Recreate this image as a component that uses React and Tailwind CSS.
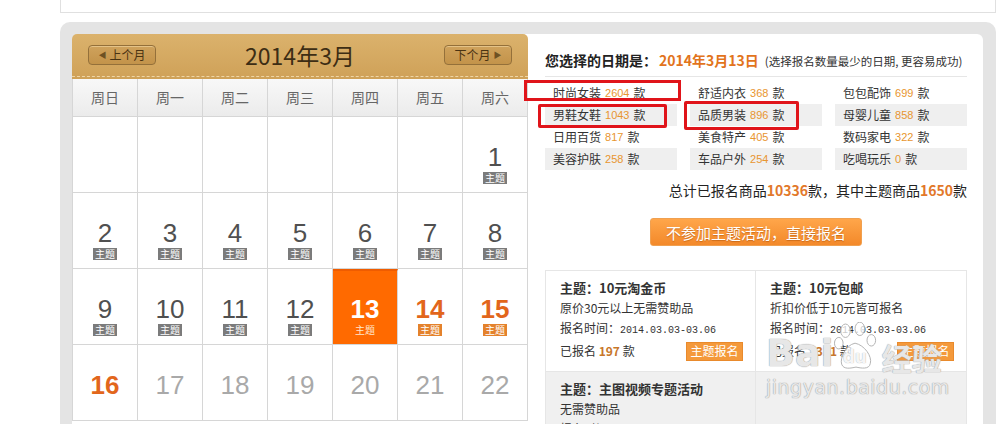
import React from 'react'

const CJK = "font-['Noto_Sans_CJK_SC',sans-serif]"
const NUM = "font-['Liberation_Sans','Noto_Sans_CJK_SC',sans-serif]"

const weekdays = ['周日', '周一', '周二', '周三', '周四', '周五', '周六']

const weeks = [
  [null, null, null, null, null, null, { d: 1, kind: 'theme' }],
  [2, 3, 4, 5, 6, 7, 8].map(d => ({ d, kind: 'theme' })),
  [
    { d: 9, kind: 'theme' }, { d: 10, kind: 'theme' }, { d: 11, kind: 'theme' },
    { d: 12, kind: 'theme' }, { d: 13, kind: 'selected' }, { d: 14, kind: 'hot' },
    { d: 15, kind: 'hot' },
  ],
  [
    { d: 16, kind: 'today' }, { d: 17, kind: 'later' }, { d: 18, kind: 'later' },
    { d: 19, kind: 'later' }, { d: 20, kind: 'later' }, { d: 21, kind: 'later' },
    { d: 22, kind: 'later' },
  ],
]

const categories = [
  ['时尚女装', 2604], ['舒适内衣', 368], ['包包配饰', 699],
  ['男鞋女鞋', 1043], ['品质男装', 896], ['母婴儿童', 858],
  ['日用百货', 817], ['美食特产', 405], ['数码家电', 322],
  ['美容护肤', 258], ['车品户外', 254], ['吃喝玩乐', 0],
]

// ─── Calendar pieces ─────────────────────────────────────────────────────────
function MonthButton({ dir, children }) {
  return (
    <button className="flex items-center gap-[3px] justify-center w-[68px] h-[20px] rounded-[4px] border border-[#94703a] bg-[linear-gradient(#cfa25c,#c3934a)] shadow-[inset_0_1px_0_rgba(255,235,190,0.45)] text-[12px] leading-none text-[#4a3312]">
      {dir === 'prev' && <span className="text-[8px] text-[#6e5123]">◀</span>}
      <span>{children}</span>
      {dir === 'next' && <span className="text-[8px] text-[#6e5123]">▶</span>}
    </button>
  )
}

function DayCell({ day }) {
  const base = 'h-[76px] border-r border-b border-[#d6d6d6]'
  if (!day) return <div className={`${base} bg-white`} />
  const { d, kind } = day

  const cellBg = kind === 'selected' ? 'bg-[#ff6a00] border-t-2 border-t-[#ef5c00]' : 'bg-white'
  const numColor =
    kind === 'selected' ? 'text-white font-bold'
    : kind === 'hot' || kind === 'today' ? 'text-[#e2661c] font-bold'
    : kind === 'later' ? 'text-[#a9a9a9]'
    : 'text-[#505050]'

  return (
    <div className={`${base} ${cellBg} flex flex-col items-center ${kind === 'selected' ? 'pt-[24px]' : 'pt-[26px]'}`}>
      <span className={`${NUM} text-[26px] leading-[28px] ${numColor}`}>{d}</span>
      {kind === 'theme' && (
        <span className="mt-[1px] h-[12px] px-[2px] text-[10px] leading-[12px] bg-[#7b7b7b] text-white">主题</span>
      )}
      {kind === 'hot' && (
        <span className="mt-[1px] h-[12px] px-[2px] text-[10px] leading-[12px] bg-[#e4822c] text-white">主题</span>
      )}
      {kind === 'selected' && (
        <span className="mt-[1px] h-[12px] px-[2px] text-[10px] leading-[12px] text-[#ffe6cc]">主题</span>
      )}
    </div>
  )
}

function Calendar() {
  return (
    <div className="w-[456px] shrink-0">
      {/* Leather header */}
      <div className="h-[45px] rounded-t-[5px] bg-[linear-gradient(#dbb26c,#cfa158)] flex flex-col">
        <div className="h-[42px] flex items-center justify-between px-[16px]">
          <MonthButton dir="prev">上个月</MonthButton>
          <span className="text-[23px] leading-none text-[#3d2d14]">2014年3月</span>
          <MonthButton dir="next">下个月</MonthButton>
        </div>
        <div className="border-t border-dashed border-[#efd6a6]" />
      </div>

      <div className="border-l border-[#d6d6d6]">
        {/* Weekday row */}
        <div className="grid grid-cols-7 h-[38px] bg-[linear-gradient(#f8f8f8,#ebebeb)]">
          {weekdays.map(w => (
            <div key={w} className="border-r border-b border-[#d6d6d6] flex items-center justify-center text-[14px] text-[#666]">
              {w}
            </div>
          ))}
        </div>
        {weeks.map((row, i) => (
          <div key={i} className="grid grid-cols-7">
            {row.map((day, j) => <DayCell key={j} day={day} />)}
          </div>
        ))}
      </div>
    </div>
  )
}

// ─── Theme card ──────────────────────────────────────────────────────────────
function ThemeCard({ title, desc, count, gray, right }) {
  return (
    <div className={`h-[100px] px-[14px] pt-[7px] text-[12px] leading-[20px] text-[#333] ${gray ? 'bg-[#f0f0f0]' : 'bg-white'} ${right ? '' : 'border-r border-[#e6e6e6]'}`}>
      <p className="font-bold text-[13px]">主题：{title}</p>
      <p>{desc}</p>
      <p>
        报名时间：<span className="font-['Liberation_Mono',monospace] text-[10px]">2014.03.03-03.06</span>
      </p>
      {count != null && (
        <div className="flex items-center justify-between">
          <span>
            已报名 <span className="font-bold text-[#c8772a]">{count}</span> 款
          </span>
          <button className="w-[57px] h-[19px] bg-[#f4993b] border border-[#e98a2c] text-white text-[12px] leading-none mr-[-2px]">
            主题报名
          </button>
        </div>
      )}
    </div>
  )
}

// ─── Right panel ─────────────────────────────────────────────────────────────
function InfoPanel() {
  return (
    <div className="flex-1 flex flex-col pl-[17px] pr-[16px]">
      <div className="h-[43px] shrink-0 flex items-end pb-[5px] border-b border-[#e6e6e6] whitespace-nowrap">
        <p className="leading-[20px]">
          <span className="text-[14px] font-bold text-[#222]">您选择的日期是：</span>
          <span className="text-[14px] font-bold text-[#e2741c] ml-[2px]">2014年3月13日</span>
          <span className="text-[11.5px] text-[#333] ml-[6px]">(选择报名数量最少的日期, 更容易成功)</span>
        </p>
      </div>

      <div className="mt-[5px] grid grid-cols-3 gap-x-[13px]">
        {categories.map(([name, n], i) => {
          const row = Math.floor(i / 3)
          return (
            <div key={name} className={`h-[22px] pl-[8px] flex items-center text-[12px] text-[#333] ${row % 2 ? 'bg-[#efefef]' : ''}`}>
              {name}
              <span className={`${NUM} text-[#e8952f] text-[11px] mx-[4px]`}>{n}</span>
              款
            </div>
          )
        })}
      </div>

      <p className="mt-[10px] text-right text-[14px] leading-[20px] text-[#222]">
        总计已报名商品<span className="font-bold text-[#e2782a]">10336</span>款，其中主题商品<span className="font-bold text-[#e2782a]">1650</span>款
      </p>

      <div className="mt-[18px] flex justify-center">
        <button className="w-[212px] h-[28px] rounded-[3px] bg-[linear-gradient(#ffa64a,#f3892a)] border border-[#f0a050] text-white text-[15px] leading-none [text-shadow:0_1px_1px_rgba(160,70,0,0.5)]">
          不参加主题活动，直接报名
        </button>
      </div>

      <div className="mt-[24px] border border-[#e6e6e6] grid grid-cols-2">
        <ThemeCard title="10元淘金币" desc="原价30元以上无需赞助品" count={197} />
        <ThemeCard title="10元包邮" desc="折扣价低于10元皆可报名" count={1311} right />
        <div className="border-t border-[#e6e6e6] col-span-2 grid grid-cols-2">
          <ThemeCard title="主图视频专题活动" desc="无需赞助品" gray />
          <div className="h-[100px] bg-[#f0f0f0]" />
        </div>
      </div>
    </div>
  )
}

// ─── Watermark ───────────────────────────────────────────────────────────────
function Watermark() {
  const ink = 'text-white/75 [text-shadow:0_0_1px_#a0a0a0,0_0_1px_#a0a0a0]'
  return (
    <div className="absolute left-[766px] top-[322px] pointer-events-none">
      <div className="flex items-end">
        <span className={`font-['DejaVu_Sans',sans-serif] font-bold text-[38px] leading-none ${ink}`}>Bai</span>
        <div className="relative w-[44px] h-[50px]">
          <svg width="44" height="50" viewBox="0 0 46 52" className="absolute inset-0">
            <g fill="rgba(255,255,255,0.75)" stroke="#b0b0b0" strokeWidth="1">
              <ellipse cx="12" cy="9" rx="5" ry="7" />
              <ellipse cx="27" cy="7" rx="5" ry="7" />
              <ellipse cx="5" cy="22" rx="4.5" ry="6" />
              <ellipse cx="39" cy="19" rx="4.5" ry="6" />
              <path d="M22 22 C12 24 6 38 8 44 C10 50 18 48 23 47 C28 48 37 50 38 43 C40 36 32 24 22 22 Z" />
            </g>
          </svg>
          <span className="absolute left-[9px] bottom-[6px] font-['DejaVu_Sans',sans-serif] font-bold text-[17px] leading-none text-white/90 [text-shadow:0_0_1px_#999]">du</span>
        </div>
        <span className={`ml-[4px] font-bold text-[30px] leading-none ${ink}`}>经验</span>
      </div>
      <p className={`mt-[6px] font-['DejaVu_Sans',sans-serif] text-[19px] leading-none tracking-[0.5px] ${ink}`}>jingyan.baidu.com</p>
    </div>
  )
}

// ─── Page ────────────────────────────────────────────────────────────────────
export default function App() {
  return (
    <div className={`relative w-[1000px] h-[424px] overflow-hidden bg-white ${CJK}`}>
      {/* strip of the panel above */}
      <div className="ml-[60px] w-[936px] h-[13px] border-x border-b border-[#e0e0e0] bg-white" />

      <div className="ml-[60px] mt-[9px] w-[936px] h-[480px] rounded-[10px] bg-[#e4e4e4] pt-[12px] pl-[12px] pr-[13px]">
        <div className="flex h-full bg-white rounded-t-[6px]">
          <Calendar />
          <InfoPanel />
        </div>
      </div>

      <Watermark />

      {/* red annotation boxes */}
      <div className="absolute left-[524px] top-[80px] w-[157px] h-[21px] border-[3px] border-[#e0141a]" />
      <div className="absolute left-[538px] top-[104px] w-[129px] h-[24px] border-[3px] border-[#e0141a] rounded-[2px]" />
      <div className="absolute left-[684px] top-[101px] w-[115px] h-[29px] border-[3px] border-[#e0141a] rounded-[2px]" />
    </div>
  )
}
